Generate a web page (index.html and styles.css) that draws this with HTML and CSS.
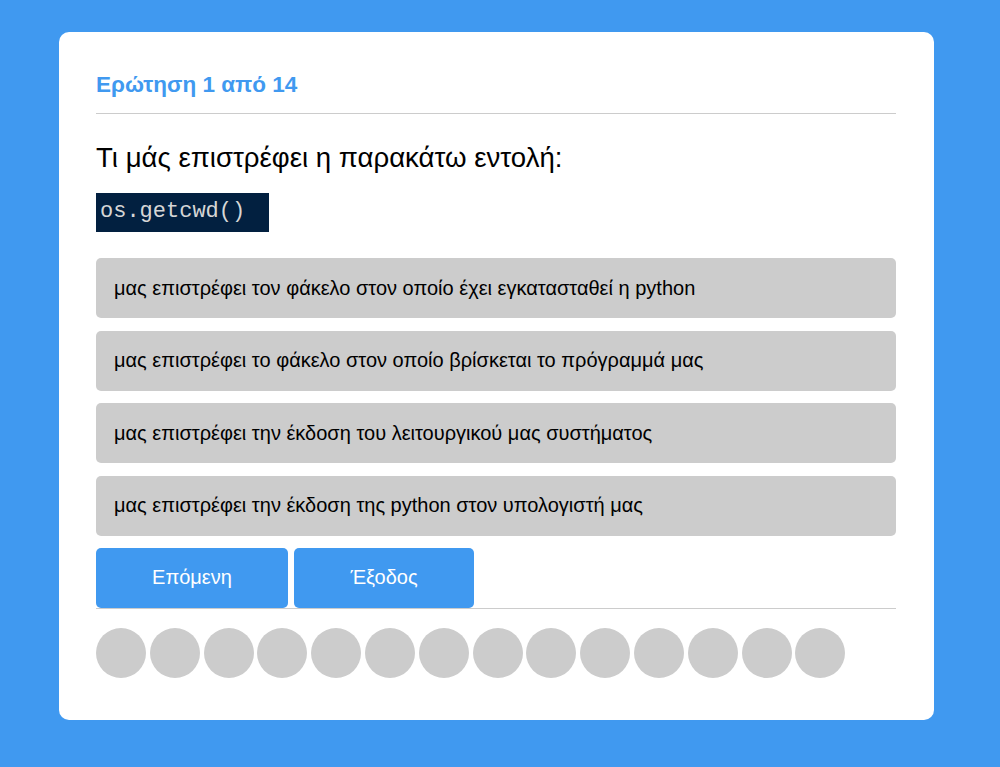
FILE: index.html
```html
<!DOCTYPE html>
<html lang="el">
<head>
<meta charset="utf-8">
<title>Quiz</title>
<link rel="stylesheet" href="styles.css">
</head>
<body>
<div class="card">
  <h3 class="title">Ερώτηση 1 από 14</h3>
  <p class="question">Τι μάς επιστρέφει η παρακάτω εντολή:</p>
  <div class="code">os.getcwd()</div>
  <div class="options">
    <div class="option">μας επιστρέφει τον φάκελο στον οποίο έχει εγκατασταθεί η python</div>
    <div class="option">μας επιστρέφει το φάκελο στον οποίο βρίσκεται το πρόγραμμά μας</div>
    <div class="option">μας επιστρέφει την έκδοση του λειτουργικού μας συστήματος</div>
    <div class="option">μας επιστρέφει την έκδοση της python στον υπολογιστή μας</div>
  </div>
  <div class="actions">
    <button class="btn btn-next">Επόμενη</button>
    <button class="btn btn-exit">Έξοδος</button>
  </div>
  <div class="dots">
    <span class="dot"></span><span class="dot"></span><span class="dot"></span><span class="dot"></span><span class="dot"></span><span class="dot"></span><span class="dot"></span><span class="dot"></span><span class="dot"></span><span class="dot"></span><span class="dot"></span><span class="dot"></span><span class="dot"></span><span class="dot"></span>
  </div>
</div>
</body>
</html>
```
FILE: styles.css
```css
html, body {
  margin: 0;
  padding: 0;
}
body {
  background: #4099f0;
  font-family: "Liberation Sans", Arial, sans-serif;
  padding-top: 32px;
  height: 767px;
  box-sizing: border-box;
}
.card {
  width: 875px;
  margin-left: 59px;
  background: #fff;
  border-radius: 10px;
  box-sizing: border-box;
  padding: 40px 38px 42px 37px;
}
.title {
  margin: 0;
  font-size: 22.5px;
  font-weight: bold;
  color: #4099f0;
  line-height: 25px;
  padding-bottom: 16px;
  border-bottom: 1px solid #cccccc;
}
.question {
  margin: 28px 0 0 0;
  font-size: 27.6px;
  line-height: 32px;
  color: #000;
}
.code {
  margin-top: 19px;
  width: 173px;
  height: 39px;
  box-sizing: border-box;
  background: #022040;
  color: #d6d6d6;
  font-family: "Liberation Mono", "Courier New", monospace;
  font-size: 22px;
  line-height: 38px;
  padding-left: 4px;
  white-space: nowrap;
  overflow: hidden;
}
.options {
  margin-top: 26px;
  display: flex;
  flex-direction: column;
  gap: 12.5px;
}
.option {
  height: 60px;
  background: #cccccc;
  border-radius: 5px;
  display: flex;
  align-items: center;
  padding-left: 18px;
  font-size: 20px;
  color: #000;
}
.actions {
  margin-top: 12px;
  display: flex;
  gap: 6px;
  border-bottom: 1px solid #cccccc;
}
.btn {
  height: 60px;
  border: none;
  border-radius: 5px;
  background: #4099f0;
  color: #fff;
  font-family: "Liberation Sans", Arial, sans-serif;
  font-size: 20px;
  padding: 0;
}
.btn-next { width: 192px; }
.btn-exit { width: 180px; }
.dots {
  margin-top: 19px;
  display: flex;
  gap: 3.8px;
}
.dot {
  width: 50px;
  height: 50px;
  border-radius: 50%;
  background: #cccccc;
}
```
